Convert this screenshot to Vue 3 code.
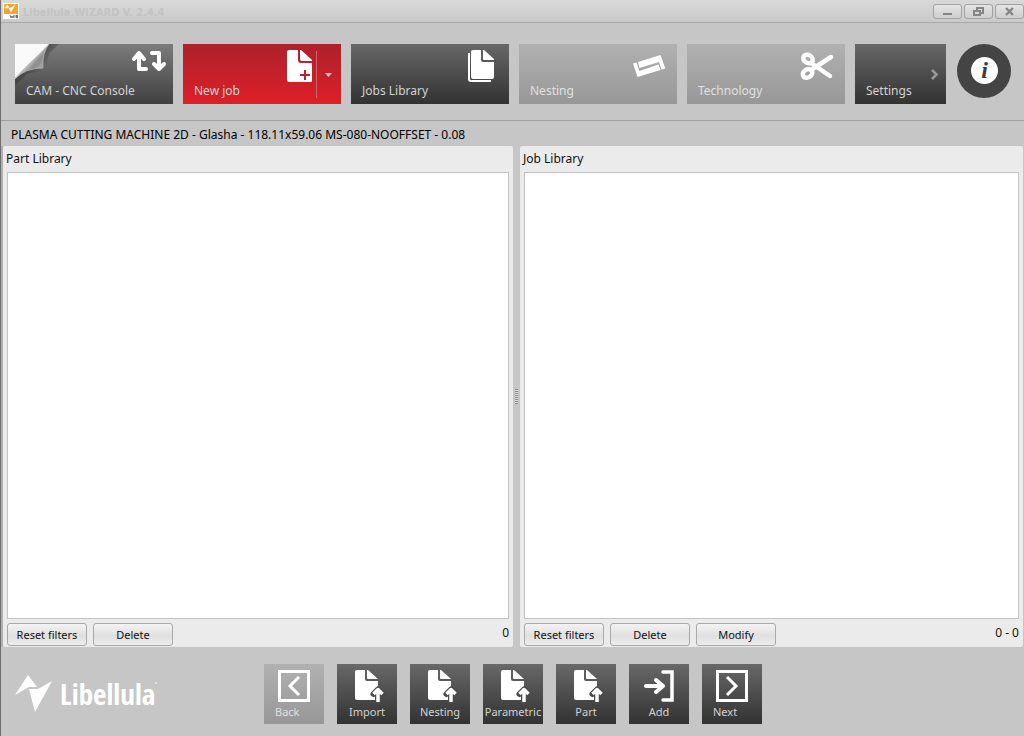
<script setup>
import { ref } from 'vue'

const machine = ref('PLASMA CUTTING MACHINE 2D - Glasha - 118.11x59.06 MS-080-NOOFFSET - 0.08')

const panels = [
  { id: 'parts', title: 'Part Library', actions: ['Reset filters', 'Delete'], count: '0' },
  { id: 'jobs', title: 'Job Library', actions: ['Reset filters', 'Delete', 'Modify'], count: '0 - 0' }
]

const steps = [
  { label: 'Back', icon: 'back', disabled: true },
  { label: 'Import', icon: 'file' },
  { label: 'Nesting', icon: 'file' },
  { label: 'Parametric', icon: 'file' },
  { label: 'Part', icon: 'file' },
  { label: 'Add', icon: 'add' },
  { label: 'Next', icon: 'next' }
]
</script>

<template>
  <div class="window">
    <header class="titlebar">
      <svg class="app-icon" viewBox="0 0 16 16" aria-hidden="true">
        <rect width="16" height="16" fill="#fff" />
        <rect x="1" y="1" width="14" height="10" fill="#f5a32f" />
        <path d="M2 5L4 2L6 4L5 5ZM6 5L8 5L12 2L8 9Z" fill="#fff" stroke="#fff" stroke-width="0.5" />
        <path d="M7 12l1 3l1-2l1 2l1-3M12 12v3M13.500 12h1v3h-1z" fill="none" stroke="#555" stroke-width="0.8" />
      </svg>
      <h1 class="title">Libellula.WIZARD V. 2.4.4</h1>
      <div class="window-buttons">
        <button class="wbtn" type="button" aria-label="Minimize">
          <svg viewBox="0 0 27 13"><path d="M9 9H18" stroke="#858585" stroke-width="2" /></svg>
        </button>
        <button class="wbtn" type="button" aria-label="Restore">
          <svg viewBox="0 0 27 13" fill="none" stroke="#858585">
            <path d="M12 5V3H18V8H16" stroke-width="2" />
            <rect x="9" y="6" width="6" height="4" stroke-width="2" />
          </svg>
        </button>
        <button class="wbtn" type="button" aria-label="Close">
          <svg viewBox="0 0 27 13"><path d="M10 3L17 10M17 3L10 10" stroke="#858585" stroke-width="2.4" /></svg>
        </button>
      </div>
    </header>

    <nav class="toolbar" aria-label="Main">
      <button class="tile console" type="button">
        <svg class="curl" viewBox="0 0 60 60" aria-hidden="true">
          <defs>
            <linearGradient id="fold" x1="0.15" y1="0.15" x2="1" y2="0.9">
              <stop offset="0.25" stop-color="#f4f4f4" />
              <stop offset="0.55" stop-color="#8c8c8c" />
              <stop offset="1" stop-color="#c4c4c4" />
            </linearGradient>
            <linearGradient id="shade" x1="0" y1="0" x2="1" y2="1">
              <stop offset="0.3" stop-color="#222" stop-opacity="0.65" />
              <stop offset="0.62" stop-color="#222" stop-opacity="0" />
            </linearGradient>
          </defs>
          <path d="M0 0H44L34 10L30 26L12 30L0 42Z" fill="url(#shade)" />
          <path d="M0 0H34Q29 6 28 14L0 34Z" fill="#fafafa" />
          <path d="M34 0Q27 9 28 24Q10 24 0 35Q6 27 17 17Q27 8 34 0Z" fill="url(#fold)" stroke="#b9b9b9" stroke-width="0.7" />
        </svg>
        <svg class="icon" viewBox="0 0 60 60" aria-hidden="true" fill="none" stroke="#fff" stroke-width="4" stroke-linecap="round" stroke-linejoin="round">
          <path d="M33 25H26V10M21 15L26 9L31 15" />
          <path d="M39 9H46V24M41 20L46 25L51 20" />
        </svg>
        <span class="label">CAM - CNC Console</span>
      </button>

      <button class="tile active" type="button">
        <svg class="icon" viewBox="0 0 60 60" aria-hidden="true">
          <path d="M8 6H17V16Q17 19 20 19H31V37Q31 38 30 38H8Q6 38 6 36V8Q6 6 8 6Z" fill="#fff" />
          <path d="M19 6H20L31 16V17H21Q19 17 19 15Z" fill="#fff" />
          <path d="M24 26V36M19 31H29" stroke="#c2202c" stroke-width="2" />
          <path d="M35.500 7V54" stroke="#d2636a" stroke-width="1" />
          <path d="M44 29H51L47.500 33Z" fill="#d0c0c0" />
        </svg>
        <span class="label">New job</span>
      </button>

      <button class="tile" type="button">
        <svg class="icon" viewBox="0 0 60 60" aria-hidden="true">
          <path d="M20 9V35Q20 37 22 37H42" fill="none" stroke="#fff" stroke-width="2" />
          <path d="M24 6H32V16Q32 18 34 18H45V33Q45 35 43 35H24Q22 35 22 33V8Q22 6 24 6Z" fill="#fff" />
          <path d="M34 6H35L45 15V16H35Q34 16 34 15Z" fill="#fff" />
        </svg>
        <span class="label">Jobs Library</span>
      </button>

      <button class="tile" type="button" disabled>
        <svg class="icon" viewBox="0 0 60 60" aria-hidden="true" fill="#fff">
          <path d="M16 19.500L19.500 18.500L22.300 27L41.500 20.500L43.500 26L20.500 33Z" />
          <path d="M21 18L43.500 11L48.300 24.500L44.500 25.500L42 18L22.500 24Z" />
        </svg>
        <span class="label">Nesting</span>
      </button>

      <button class="tile" type="button" disabled>
        <svg class="icon" viewBox="0 0 60 60" aria-hidden="true" fill="none" stroke="#fff" stroke-width="4.500" stroke-linecap="round">
          <path d="M46 13L26 26M45 32L26 19" />
          <ellipse cx="23" cy="15" rx="5" ry="4" transform="rotate(35 23 15)" />
          <ellipse cx="22.500" cy="29.500" rx="5" ry="4" transform="rotate(-35 22.500 29.500)" />
        </svg>
        <span class="label">Technology</span>
      </button>

      <button class="tile settings" type="button">
        <svg class="icon" viewBox="0 0 60 60" aria-hidden="true">
          <path d="M46 26L50.500 30.500L46 35" fill="none" stroke="#999" stroke-width="2.500" />
        </svg>
        <span class="label">Settings</span>
      </button>

      <button class="info" type="button" aria-label="Information">
        <svg viewBox="0 0 54 54" aria-hidden="true">
          <circle cx="27" cy="27" r="27" fill="#444" />
          <circle cx="27.500" cy="26.500" r="13.500" fill="#fff" />
          <text class="info-letter" x="27.500" y="34" text-anchor="middle">i</text>
        </svg>
      </button>
    </nav>

    <p class="status">{{ machine }}</p>

    <main class="panels">
      <template v-for="(panel, index) in panels" :key="panel.id">
        <div v-if="index" class="splitter" role="separator" aria-orientation="vertical">
          <span class="grip"></span>
        </div>
        <section class="panel" :aria-labelledby="panel.id">
          <h2 :id="panel.id" class="panel-title">{{ panel.title }}</h2>
          <div class="list"></div>
          <div class="actions">
            <button v-for="action in panel.actions" :key="action" class="btn" type="button">{{ action }}</button>
            <output class="count">{{ panel.count }}</output>
          </div>
        </section>
      </template>
    </main>

    <footer class="footer">
      <div class="brand">
        <svg class="mark" viewBox="0 0 38 38" aria-hidden="true" fill="#fff">
          <path d="M0 20L13 0L22 12L14 12Z" />
          <path d="M14 14L23 14L37 6L20 37Z" />
        </svg>
        <span class="wordmark">Libellula</span>
        <span class="dot"></span>
      </div>
      <div class="steps">
        <button
          v-for="step in steps"
          :key="step.label"
          class="tile step"
          :class="{ edge: step.icon === 'back' || step.icon === 'next' }"
          type="button"
          :disabled="step.disabled"
        >
          <svg v-if="step.icon === 'file'" class="icon" viewBox="0 0 60 60" aria-hidden="true">
            <path d="M20 6H28V15Q28 17 30 17H41V36H20Q18 36 18 34V8Q18 6 20 6Z" fill="#fff" />
            <path d="M30 6H31L41 15H31Q30 15 30 14Z" fill="#fff" />
            <path d="M41 37V26M36.500 30L41 25.500L45.500 30" fill="none" stroke="#4b4b4b" stroke-width="6" stroke-linejoin="round" stroke-linecap="round" />
            <path d="M41 38V27M36.500 30L41 25.500L45.500 30" fill="none" stroke="#fff" stroke-width="3.500" stroke-linejoin="round" />
          </svg>
          <svg v-else-if="step.icon === 'add'" class="icon" viewBox="0 0 60 60" aria-hidden="true" fill="none" stroke="#fff" stroke-linecap="round">
            <path d="M34 8H43V36H34" stroke-width="3.500" />
            <path d="M17 22H34M27 16L34 22L27 28" stroke-width="4" stroke-linejoin="round" />
          </svg>
          <svg v-else class="icon" viewBox="0 0 60 60" aria-hidden="true" fill="none" stroke="#fff" stroke-width="3">
            <rect x="15.500" y="7.500" width="29" height="29" />
            <path v-if="step.icon === 'back'" d="M35 13L26 22L35 31" />
            <path v-else d="M25 13L34 22L25 31" />
          </svg>
          <span class="label">{{ step.label }}</span>
        </button>
      </div>
    </footer>
  </div>
</template>

<style>
body {
  margin: 0;
}
</style>

<style scoped>
.window {
  box-sizing: border-box;
  min-height: 100vh;
  display: flex;
  flex-direction: column;
  background: #c6c6c6;
  border-left: 1px solid #6e6e6e;
  font-family: "Noto Sans", "DejaVu Sans Condensed", sans-serif;
  font-size: 12px;
  color: #111;
}
button {
  font: inherit;
  color: inherit;
  border: 0;
  padding: 0;
  margin: 0;
}
svg {
  display: block;
}
.titlebar {
  display: flex;
  align-items: center;
  height: 22px;
  padding-left: 2px;
  background: linear-gradient(#d9d9d9, #cacaca);
  border-bottom: 1px solid #a8a8a8;
}
.app-icon {
  width: 16px;
  height: 16px;
}
.title {
  flex: 1;
  margin: 2px 0 0 4px;
  font-family: "DejaVu Sans Condensed", sans-serif;
  font-size: 11px;
  font-weight: bold;
  color: #c3c3c3;
}
.window-buttons {
  display: flex;
  gap: 2px;
}
.wbtn {
  box-sizing: border-box;
  width: 29px;
  height: 15px;
  border: 1px solid #a2a2a2;
  border-radius: 3px;
  background: linear-gradient(#e4e4e4, #cdcdcd);
}
.wbtn svg {
  width: 27px;
  height: 13px;
}
.toolbar {
  display: flex;
  gap: 10px;
  padding: 21px 12px 16px 14px;
  border-bottom: 1px solid #9e9e9e;
}
.tile {
  display: grid;
  width: 158px;
  height: 60px;
  background: linear-gradient(#686868, #323232);
  color: #d2d2d2;
  text-align: left;
}
.tile > * {
  grid-area: 1 / 1;
}
.tile:disabled {
  background: linear-gradient(#b1b1b1, #979797);
  color: #e0e0e0;
}
.console {
  background: linear-gradient(#7c7c7c, #404040);
}
.active {
  background: linear-gradient(#ad212c, #de1f27);
}
.settings {
  width: 91px;
}
.icon,
.curl {
  width: 60px;
  height: 60px;
}
.icon {
  justify-self: end;
}
.label {
  align-self: end;
  padding: 0 0 5px 11px;
  line-height: 16px;
}
.info {
  width: 54px;
  height: 54px;
  margin-left: 1px;
  border-radius: 50%;
  background: none;
}
.info-letter {
  font: italic bold 24px "Liberation Serif", serif;
  fill: #3c3c3c;
}
.status {
  margin: 0;
  padding: 6px 10px 3px;
  line-height: 16px;
  color: #000;
}
.panels {
  flex: 1;
  display: grid;
  grid-template-columns: 510fr 7px 503fr;
  padding-right: 1px;
  border-left: 2px solid #b0b0b0;
}
.panel {
  display: flex;
  flex-direction: column;
  padding: 4px 4px 0;
  background: #ebebeb;
  border-radius: 2px;
}
.panel-title {
  margin: 0 0 5px -1px;
  font-size: 12px;
  font-weight: normal;
  line-height: 17px;
}
.list {
  flex: 1;
  background: #fff;
  border: 1px solid #c3c3c3;
}
.actions {
  display: flex;
  gap: 6px;
  padding: 4px 0 1px;
}
.btn {
  box-sizing: border-box;
  width: 80px;
  height: 23px;
  border: 1px solid #a9a9a9;
  border-radius: 3px;
  background: linear-gradient(#f3f3f3, #e0e0e0 55%, #ececec);
  font-size: 11px;
}
.count {
  margin-left: auto;
  line-height: 20px;
}
.splitter {
  display: flex;
  align-items: center;
  justify-content: center;
}
.grip {
  width: 3px;
  height: 15px;
  background: repeating-linear-gradient(#8a8a8a 0 1px, #dedede 1px 2px);
}
.footer {
  display: flex;
  align-items: flex-start;
  padding: 17px 14px 12px;
}
.brand {
  display: flex;
  align-items: center;
  width: 249px;
  height: 60px;
}
.mark {
  width: 38px;
  height: 38px;
}
.wordmark {
  margin-left: 7px;
  font: bold 29px/40px "Liberation Sans Narrow", "Open Sans Condensed", "Roboto Condensed", "Liberation Sans", sans-serif;
  color: #fff;
}
.dot {
  width: 2px;
  height: 2px;
  margin-bottom: 22px;
  border-radius: 50%;
  background: #e6e6e6;
}
.steps {
  display: flex;
  gap: 13px;
}
.step {
  width: 60px;
  font-size: 11px;
}
.step .label {
  padding: 0 0 4px;
  text-align: center;
}
.step.edge .label {
  padding-left: 11px;
  text-align: left;
}
</style>
